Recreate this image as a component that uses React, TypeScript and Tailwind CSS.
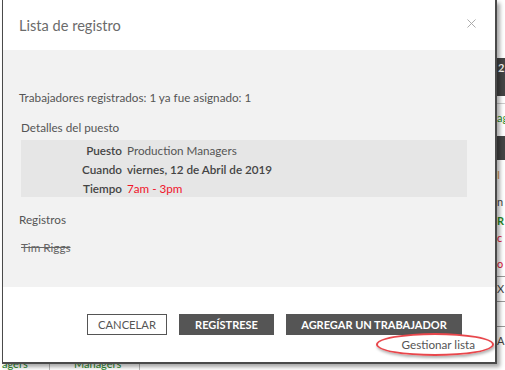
import React from "react";
import { X } from "lucide-react";

const details = [
  { label: "Puesto", value: "Production Managers", cls: "text-[#555] font-normal" },
  { label: "Cuando", value: "viernes, 12 de Abril de 2019", cls: "text-[#444] font-semibold" },
  { label: "Tiempo", value: "7am - 3pm", cls: "text-[#f0142a] font-normal" },
];

function Backdrop() {
  // the page behind the dialog, only its edges show
  return (
    <div className="h-[370px] w-[505px] bg-white overflow-hidden">
      <div className="ml-[497px] flex flex-col text-[11px] leading-none">
        <div className="h-[58px]" />
        <div className="h-[38px] bg-[#444] text-white font-semibold pl-[1px] pt-[4px]">2,</div>
        <div className="h-[8px] border-b border-[#ccc]" />
        <div className="h-[32px] pt-[8px] text-[#2a8a2a]">ag</div>
        <div className="h-[24px] bg-[#444]" />
        <div className="h-[30px] pt-[9px] text-[#e0a050]">I</div>
        <div className="h-[22px] pt-[6px] text-[#444]">n</div>
        <div className="h-[18px] pt-[3px] text-[#2a8a2a] font-bold">R</div>
        <div className="h-[28px] pt-[2px] text-[#e0143c]">c</div>
        <div className="h-[18px] text-[#e0143c]">o</div>
        <div className="h-[26px] border-y border-[#999] pt-[6px] text-[#444]">X</div>
        <div className="h-[24px]" />
        <div className="h-[30px] border-t border-[#999] pt-[8px] text-[#444]">A</div>
      </div>
    </div>
  );
}

export default function App() {
  return (
    <div className="relative h-[370px] w-[505px] overflow-hidden" style={{ fontFamily: "Lato, 'Open Sans', sans-serif" }}>
      <Backdrop />
      <div className="absolute left-0 bottom-0 w-[240px] h-[8px] flex text-[#2a8a2a] text-[11px] leading-[8px] overflow-hidden">
        <div className="w-[50px] border-r border-[#bbb] -mt-[2px] pl-[2px]">agers</div>
        <div className="w-[90px] border-r border-[#bbb] -mt-[2px] pl-[24px]">Managers</div>
      </div>

      <div className="absolute left-[2px] top-0 w-[495px] h-[364px] bg-white border-l border-r-2 border-b-2 border-[#4a4a4a] shadow-[3px_3px_4px_rgba(0,0,0,0.35)] flex flex-col">
        <div className="h-[50px] flex items-center justify-between pl-[16px] pr-[16px] shrink-0">
          <h1 className="text-[14.6px] text-[#6b6b6b] pt-[2px]">Lista de registro</h1>
          <X size={15} strokeWidth={1.5} className="text-[#a5a5a5] -mt-[3px]" />
        </div>

        <div className="bg-[#f2f2f2] h-[237px] pl-[16px] pr-[28px] pt-[39px] text-[11.7px] leading-[16px] text-[#555] shrink-0">
          <p>Trabajadores registrados: 1 ya fue asignado: 1</p>
          <p className="mt-[14px] ml-[2px]">Detalles del puesto</p>
          <div className="mt-[5px] ml-[2px] bg-[#e6e6e6] h-[57px]">
            {details.map((d) => (
              <div key={d.label} className="flex h-[19px] items-center">
                <span className="w-[101px] text-right font-semibold text-[#444]">{d.label}</span>
                <span className={"ml-[5px] " + d.cls}>{d.value}</span>
              </div>
            ))}
          </div>
          <p className="mt-[14px]">Registros</p>
          <p className="mt-[12px] ml-[2px] line-through text-[#666]">Tim Riggs</p>
        </div>

        <div className="relative flex-1">
          <div className="flex justify-end gap-[12px] pr-[33px] pt-[27px]">
            <button className="h-[21px] w-[80px] border border-[#555] bg-white text-[11.2px] text-[#555] leading-none">CANCELAR</button>
            <button className="h-[21px] w-[95px] bg-[#555] text-[11px] font-bold text-white leading-none">REGÍSTRESE</button>
            <button className="h-[21px] w-[176px] bg-[#555] text-[11px] font-bold text-white leading-none">AGREGAR UN TRABAJADOR</button>
          </div>
          <div className="flex justify-end pr-[20px] pt-[1px]">
            <span className="text-[11.7px] text-[#555]">Gestionar lista</span>
          </div>
          <div className="absolute left-[373px] top-[46px] w-[118px] h-[23px] rounded-[50%] border-2 border-[#e8474c] shadow-[1px_2px_3px_rgba(0,0,0,0.3)]" />
        </div>
      </div>
    </div>
  );
}
